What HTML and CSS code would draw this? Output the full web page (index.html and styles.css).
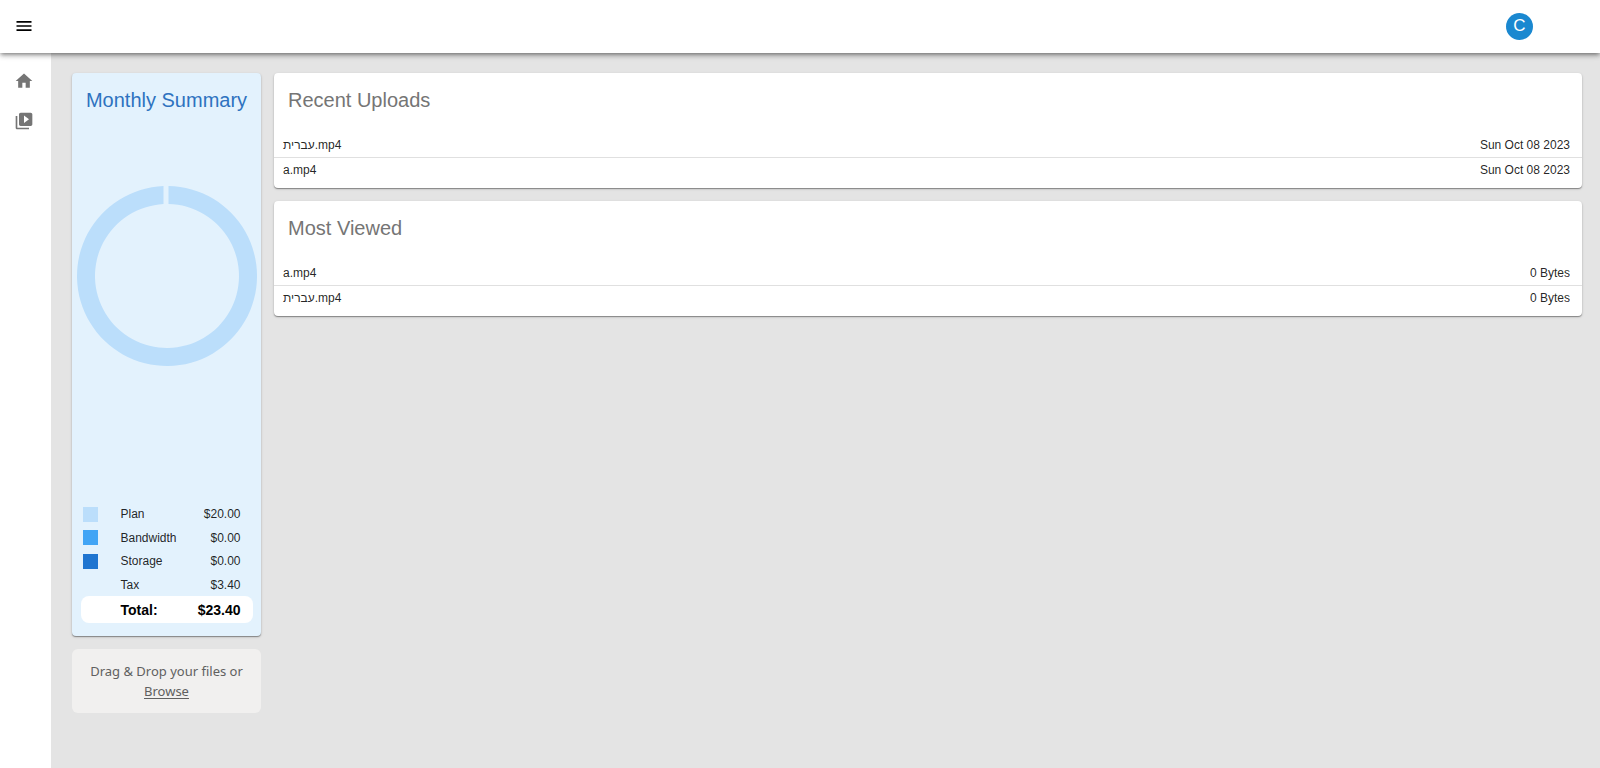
FILE: index.html
```html
<!DOCTYPE html>
<html lang="en">
<head>
  <meta charset="UTF-8">
  <meta name="viewport" content="width=device-width, initial-scale=1.0">
  <title>Dashboard</title>
  <link rel="stylesheet" href="styles.css">
</head>
<body>

  <header class="topbar">
    <button type="button" class="icon-button" aria-label="Menu">
      <svg class="icon" viewBox="0 0 24 24"><path d="M3 18h18v-2H3v2zm0-5h18v-2H3v2zm0-7v2h18V6H3z"/></svg>
    </button>
    <button type="button" class="avatar" aria-label="Account">C</button>
  </header>

  <div class="layout">
    <nav class="sidebar">
      <a href="#" aria-label="Home">
        <svg class="icon" viewBox="0 0 24 24"><path d="M10 20v-6h4v6h5v-8h3L12 3 2 12h3v8z"/></svg>
      </a>
      <a href="#" aria-label="Videos">
        <svg class="icon" viewBox="0 0 24 24"><path d="M4 6H2v14c0 1.1.9 2 2 2h14v-2H4V6zm16-4H8c-1.1 0-2 .9-2 2v12c0 1.1.9 2 2 2h12c1.1 0 2-.9 2-2V4c0-1.1-.9-2-2-2zm-8 12.500v-9l6 4.500-6 4.500z"/></svg>
      </a>
    </nav>

    <main class="content">
      <div class="left-column">
        <section class="card summary">
          <h2>Monthly Summary</h2>
          <svg class="donut" viewBox="0 0 180 180">
            <path d="M91.500 0.012A90 90 0 1 1 86.500 0.068L86.500 18.085A72 72 0 1 0 91.500 18.016Z"/>
          </svg>
          <table class="costs">
            <tbody>
              <tr><td><span class="swatch plan"></span></td><td>Plan</td><td>$20.00</td></tr>
              <tr><td><span class="swatch bandwidth"></span></td><td>Bandwidth</td><td>$0.00</td></tr>
              <tr><td><span class="swatch storage"></span></td><td>Storage</td><td>$0.00</td></tr>
              <tr><td></td><td>Tax</td><td>$3.40</td></tr>
            </tbody>
            <tfoot>
              <tr><td></td><td>Total:</td><td>$23.40</td></tr>
            </tfoot>
          </table>
        </section>

        <div class="dropzone">
          Drag &amp; Drop your files or
          <button type="button" class="browse">Browse</button>
        </div>
      </div>

      <div class="right-column">
        <section class="card">
          <h2>Recent Uploads</h2>
          <table class="files">
            <tr><td>עברית.mp4</td><td>Sun Oct 08 2023</td></tr>
            <tr><td>a.mp4</td><td>Sun Oct 08 2023</td></tr>
          </table>
        </section>

        <section class="card">
          <h2>Most Viewed</h2>
          <table class="files">
            <tr><td>a.mp4</td><td>0 Bytes</td></tr>
            <tr><td>עברית.mp4</td><td>0 Bytes</td></tr>
          </table>
        </section>
      </div>
    </main>
  </div>

</body>
</html>
```
FILE: styles.css
```css
* { box-sizing: border-box; }

body {
  margin: 0;
  min-height: 100vh;
  display: flex;
  flex-direction: column;
  font-family: "Liberation Sans", Arial, sans-serif;
  font-size: 12px;
  color: rgba(0, 0, 0, 0.87);
  background-color: #e4e4e4;
}

button {
  padding: 0;
  border: none;
  background: none;
  font: inherit;
  color: inherit;
  cursor: pointer;
}

.icon {
  display: block;
  width: 20px;
  height: 20px;
  fill: currentColor;
}

.icon-button { color: #000; }

.topbar {
  display: flex;
  align-items: center;
  justify-content: space-between;
  height: 53px;
  padding: 0 67px 1px 14px;
  background-color: #fff;
  box-shadow: 0 2px 4px -1px rgba(0, 0, 0, 0.4), 0 3px 5px rgba(0, 0, 0, 0.14), 0 1px 8px rgba(0, 0, 0, 0.12);
  z-index: 1;
}

.avatar {
  width: 27px;
  height: 27px;
  border-radius: 50%;
  background-color: #1a88d0;
  color: #fff;
  font-size: 17px;
}

.layout {
  display: flex;
  flex: 1;
}

.sidebar {
  display: flex;
  flex-direction: column;
  gap: 20px;
  width: 51px;
  padding: 18px 14px;
  background-color: #fff;
}

.sidebar a { color: #757575; }

.content {
  display: flex;
  align-items: flex-start;
  gap: 13px;
  flex: 1;
  padding: 20px 18px 20px 21px;
}

.left-column,
.right-column {
  display: flex;
  flex-direction: column;
  gap: 13px;
}

.left-column { width: 189px; }
.right-column { flex: 1; }

.card {
  padding-bottom: 6px;
  border-radius: 4px;
  background-color: #fff;
  box-shadow: 0 1px 1px rgba(0, 0, 0, 0.35), 0 1px 3px rgba(0, 0, 0, 0.15);
}

.card h2 {
  margin: 0;
  padding: 14px 14px 19px;
  font-size: 20px;
  line-height: 27px;
  font-weight: normal;
  color: #757575;
}

/* monthly summary */
.summary {
  padding-bottom: 13px;
  background-color: #e3f2fd;
}

.summary h2 {
  padding-left: 13px;
  padding-right: 13px;
  color: #2e72c0;
  text-align: center;
  white-space: nowrap;
}

.donut {
  display: block;
  width: 180px;
  height: 180px;
  margin: 53px auto 136px;
  fill: #bbdefb;
}

.costs {
  width: 172px;
  margin: 0 auto;
  border-collapse: collapse;
}

.costs td {
  height: 23px;
  padding: 0;
}

.costs tbody tr:nth-child(odd) td { height: 24px; }
.costs td:first-child { width: 40px; padding-left: 2px; }
.costs td:last-child { padding-right: 12px; text-align: right; }

.costs tfoot td {
  height: 27px;
  background-color: #fff;
  font-size: 14px;
  font-weight: bold;
  color: #000;
}

.costs tfoot td:first-child { border-radius: 8px 0 0 8px; }
.costs tfoot td:last-child { border-radius: 0 8px 8px 0; }

.swatch {
  display: block;
  width: 15px;
  height: 15px;
}

.plan { background-color: #bbdefb; }
.bandwidth { background-color: #42a5f5; }
.storage { background-color: #1f75d0; }

/* uploads and views */
.files {
  width: 100%;
  border-collapse: separate;
  border-spacing: 0;
}

.files td {
  height: 24px;
  padding: 0 12px 0 9px;
}

.files td:last-child { text-align: right; }

.files tr + tr td {
  height: 25px;
  border-top: 1px solid #e0e0e0;
}

.dropzone {
  padding: 12px 10px;
  border-radius: 6px;
  background-color: #f1f0ef;
  font-family: "Noto Sans", sans-serif;
  font-size: 13px;
  line-height: 20px;
  text-align: center;
  color: #606060;
}

.browse { text-decoration: underline; text-underline-offset: 2px; }
```
